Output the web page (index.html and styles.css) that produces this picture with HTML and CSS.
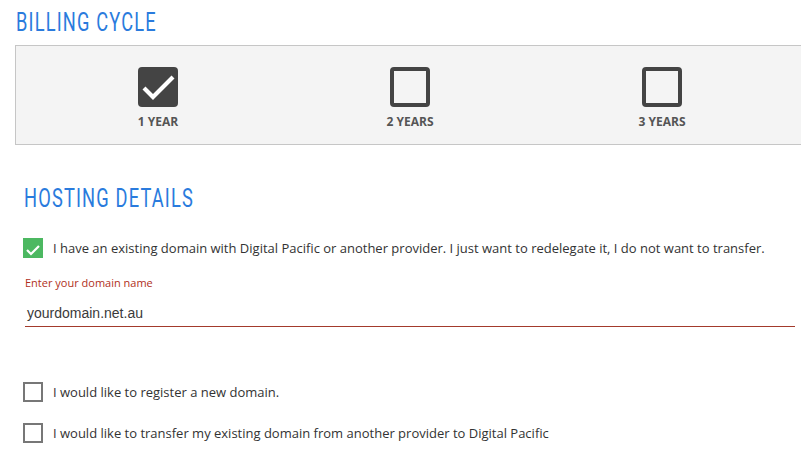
FILE: index.html
```html
<!DOCTYPE html>
<html>
<head>
<meta charset="utf-8">
<link rel="stylesheet" href="styles.css">
</head>
<body>
<div class="page">
  <div class="title-row billing-title"><h2 class="title">BILLING CYCLE</h2></div>
  <div class="cycle-panel">
    <div class="cycle-option">
      <span class="big-box checked">
        <svg viewBox="0 0 40 40" width="40" height="40"><path d="M6 21 L15 30 L35 10" fill="none" stroke="#fff" stroke-width="4.2"/></svg>
      </span>
      <span class="cycle-label">1 YEAR</span>
    </div>
    <div class="cycle-option">
      <span class="big-box"></span>
      <span class="cycle-label">2 YEARS</span>
    </div>
    <div class="cycle-option">
      <span class="big-box"></span>
      <span class="cycle-label">3 YEARS</span>
    </div>
  </div>

  <div class="title-row hosting-title"><h2 class="title">HOSTING DETAILS</h2></div>

  <div class="check-row first">
    <span class="small-box green">
      <svg viewBox="0 0 20 20" width="20" height="20"><path d="M4 12 L8 16 L16 8" fill="none" stroke="#fff" stroke-width="2.2"/></svg>
    </span>
    <span class="check-text">I have an existing domain with Digital Pacific or another provider. I just want to redelegate it, I do not want to transfer.</span>
  </div>

  <div class="field">
    <label class="field-label">Enter your domain name</label>
    <div class="field-input">yourdomain.net.au</div>
  </div>

  <div class="check-row second">
    <span class="small-box"></span>
    <span class="check-text">I would like to register a new domain.</span>
  </div>
  <div class="check-row third">
    <span class="small-box"></span>
    <span class="check-text">I would like to transfer my existing domain from another provider to Digital Pacific</span>
  </div>
</div>
</body>
</html>
```

FILE: styles.css
```css
html, body {
  margin: 0;
  padding: 0;
  background: #fff;
  overflow: hidden;
}
.page {
  width: 801px;
  height: 452px;
  overflow: hidden;
  font-family: "Open Sans", "Liberation Sans", sans-serif;
  color: #333;
}
.title-row {
  height: 28px;
}
.title {
  display: inline-block;
  margin: 0;
  font-family: "Roboto", "Liberation Sans", sans-serif;
  font-weight: normal;
  font-size: 25px;
  line-height: 28px;
  letter-spacing: 1.6px;
  color: #2a7bdd;
  transform: scaleX(0.73);
  transform-origin: left center;
  white-space: nowrap;
}
.billing-title {
  padding: 9px 0 0 16px;
  margin-bottom: 8px;
}
.cycle-panel {
  margin-left: 15px;
  width: 820px;
  height: 100px;
  box-sizing: border-box;
  border: 1px solid #c6c6c6;
  background: #f4f4f4;
  display: grid;
  grid-template-columns: 252px 252px 252px;
  padding: 21px 0 0 16px;
}
.cycle-option {
  display: flex;
  flex-direction: column;
  align-items: center;
}
.big-box {
  width: 40px;
  height: 40px;
  box-sizing: border-box;
  border: 4px solid #444;
  border-radius: 4px;
  display: block;
}
.big-box.checked {
  background: #444;
  border: none;
}
.big-box svg { display: block; }
.cycle-label {
  margin-top: 6px;
  font-size: 12px;
  font-weight: bold;
  line-height: 17px;
  color: #555;
}
.hosting-title {
  margin-top: 40px;
  padding-left: 24px;
}
.check-row {
  display: flex;
  align-items: center;
  padding-left: 23px;
  height: 20px;
}
.check-row.first { margin-top: 25px; }
.check-row.second { margin-top: 55px; }
.check-row.third { margin-top: 21px; }
.small-box {
  width: 20px;
  height: 20px;
  box-sizing: border-box;
  border: 2px solid #777;
  flex: none;
  display: block;
}
.small-box.green {
  background: #4cb861;
  border: none;
}
.small-box svg { display: block; }
.check-text {
  margin-left: 10px;
  font-size: 13px;
  color: #333;
}
.field {
  margin: 17px 6px 0 25px;
}
.field-label {
  display: block;
  font-size: 11px;
  line-height: 16px;
  color: #b0301c;
}
.field-input {
  margin-top: 13px;
  padding-left: 2px;
  font-family: "Liberation Sans", Arial, sans-serif;
  font-size: 14px;
  line-height: 19px;
  padding-bottom: 3px;
  color: #3a3a3a;
  border-bottom: 1px solid #a33a2c;
}
```
